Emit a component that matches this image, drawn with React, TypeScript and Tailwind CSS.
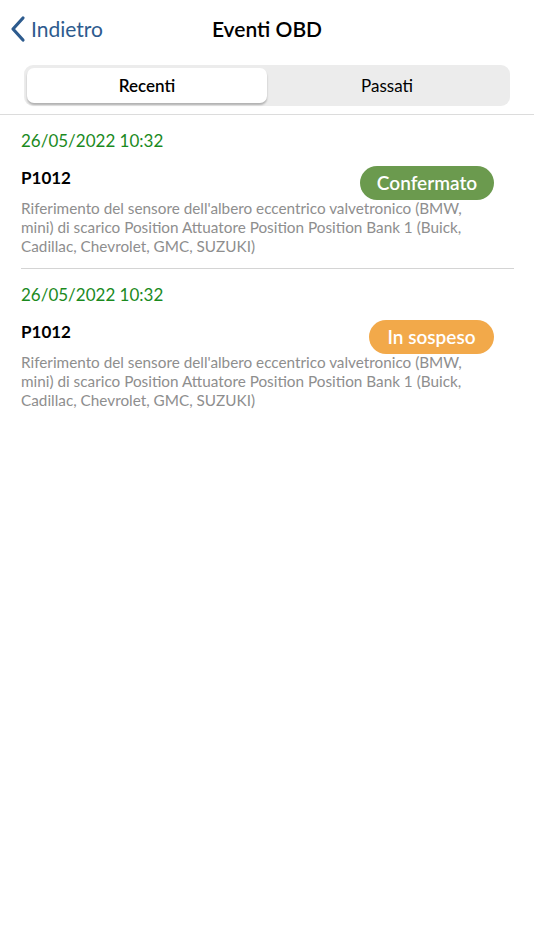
import React from "react";

const desc =
  "Riferimento del sensore dell'albero eccentrico valvetronico (BMW, mini) di scarico Position Attuatore Position Position Bank 1 (Buick, Cadillac, Chevrolet, GMC, SUZUKI)";

function Item({ badge, color, badgeW }: { badge: string; color: string; badgeW: string }) {
  return (
    <div className="pt-[15px]">
      <div className="text-[17px] leading-[22px] text-[#1b8a1e]">26/05/2022 10:32</div>
      <div className="mt-[15px] flex items-start justify-between pr-[20px]">
        <div className="text-[17px] leading-[22px] font-bold text-black">P1012</div>
        <div
          className={`${color} ${badgeW} mt-[-1px] h-[34px] rounded-full flex items-center justify-center text-white text-[19px] font-semibold`}
        >
          {badge}
        </div>
      </div>
      <div className="mt-[-1px] pr-[38px] text-[15.3px] leading-[19px] text-[#8e8e8e]">{desc}</div>
    </div>
  );
}

export default function App() {
  return (
    <div className="w-[534px] h-[950px] bg-white" style={{ fontFamily: "Lato, 'Open Sans', sans-serif" }}>
      <div className="relative h-[57px] flex items-center">
        <div className="flex items-center pl-[10px] text-[#2d5b8e]">
          <svg width="16" height="28" viewBox="0 0 16 28" className="mr-[5px]">
            <path d="M13 3 L3 14 L13 25" fill="none" stroke="#2d5b8e" strokeWidth="3.2" strokeLinecap="round" strokeLinejoin="round" />
          </svg>
          <span className="text-[21px] leading-none">Indietro</span>
        </div>
        <div className="absolute left-0 right-0 text-center text-[21px] font-semibold text-black pointer-events-none">
          Eventi OBD
        </div>
      </div>
      <div className="px-[24px] pt-[8px] pb-[8px] border-b border-[#dcdcdc]">
        <div className="h-[41px] rounded-[9px] bg-[#ececec] p-[3px] flex">
          <div className="flex-1 rounded-[7px] bg-white shadow-[0_2px_2px_rgba(0,0,0,0.25)] flex items-center justify-center text-[17px] font-semibold text-black">
            Recenti
          </div>
          <div className="flex-1 flex items-center justify-center text-[17px] text-black">Passati</div>
        </div>
      </div>
      <div className="pl-[21px] pr-[20px]">
        <div className="pb-[12px] border-b border-[#d4d4d4]">
          <Item badge="Confermato" color="bg-[#6b9a4e]" badgeW="w-[134px]" />
        </div>
        <Item badge="In sospeso" color="bg-[#f2a94a]" badgeW="w-[125px]" />
      </div>
    </div>
  );
}
